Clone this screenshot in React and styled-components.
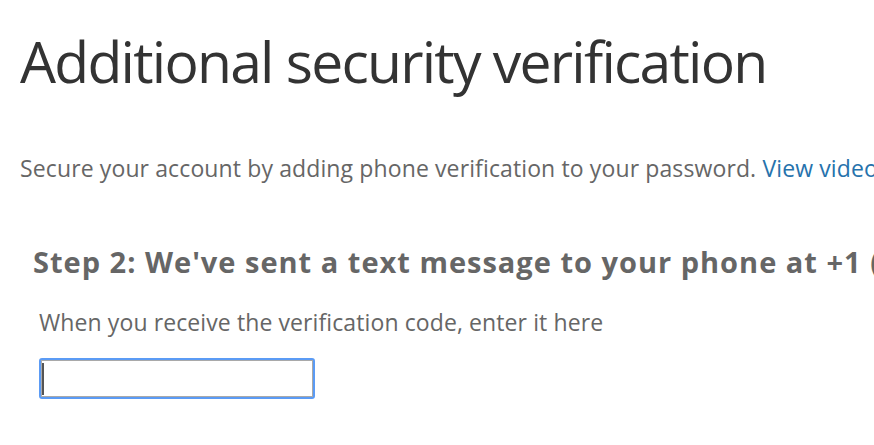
import React from 'react'
import styled, { createGlobalStyle } from 'styled-components'

const GlobalStyle = createGlobalStyle`
  html, body {
    margin: 0;
    padding: 0;
    background: #fff;
    overflow: hidden;
  }
  body {
    font-family: 'Open Sans', 'Noto Sans', Arial, sans-serif;
  }
`

const Page = styled.div`
  padding: 27px 0 0 20px;
  white-space: nowrap;
`

const Title = styled.h1`
  margin: 0;
  font-size: 57px;
  line-height: 68px;
  font-weight: 400;
  color: #333;
  letter-spacing: -1.75px;
`

const Intro = styled.p`
  margin: 59px 0 0;
  font-size: 23px;
  line-height: 28px;
  color: #666;
  letter-spacing: 0.12px;
`

const VideoLink = styled.a`
  color: #2672ac;
  text-decoration: none;
`

const Step = styled.section`
  margin-top: 63px;
  padding-left: 13px;
`

const StepHeading = styled.h2`
  margin: 0;
  font-size: 29px;
  line-height: 34px;
  font-weight: 700;
  color: #666;
  letter-spacing: 1px;
`

const StepBody = styled.div`
  padding-left: 6px;
  margin-top: 29px;
  display: flex;
  flex-direction: column;
  gap: 22px;
`

const Label = styled.label`
  font-size: 23px;
  line-height: 28px;
  color: #666;
  letter-spacing: 0.1px;
`

const FieldWrap = styled.div`
  position: relative;
  width: 276px;
  height: 41px;
`

const CodeInput = styled.input`
  box-sizing: border-box;
  width: 100%;
  height: 100%;
  margin: 0;
  padding: 0 4px;
  border: 2px solid #5b9bf5;
  border-radius: 3px;
  outline: none;
  background: #fff;
  font: inherit;
  font-size: 18px;
  caret-color: transparent;
`

const InnerEdge = styled.span`
  position: absolute;
  inset: 2px;
  border: 1px solid #a9a9a9;
  pointer-events: none;
`

const Caret = styled.span`
  position: absolute;
  left: 3px;
  top: 5px;
  width: 2px;
  height: 32px;
  background: #555;
`

export default function App() {
  return (
    <Page>
      <GlobalStyle />
      <Title>Additional security verification</Title>
      <Intro>
        Secure your account by adding phone verification to your password.{' '}
        <VideoLink href="#">View video</VideoLink>
      </Intro>
      <Step>
        <StepHeading>Step 2: We've sent a text message to your phone at +1 (</StepHeading>
        <StepBody>
          <Label htmlFor="code">When you receive the verification code, enter it here</Label>
          <FieldWrap>
            <CodeInput id="code" type="text" />
            <InnerEdge />
            <Caret />
          </FieldWrap>
        </StepBody>
      </Step>
    </Page>
  )
}
